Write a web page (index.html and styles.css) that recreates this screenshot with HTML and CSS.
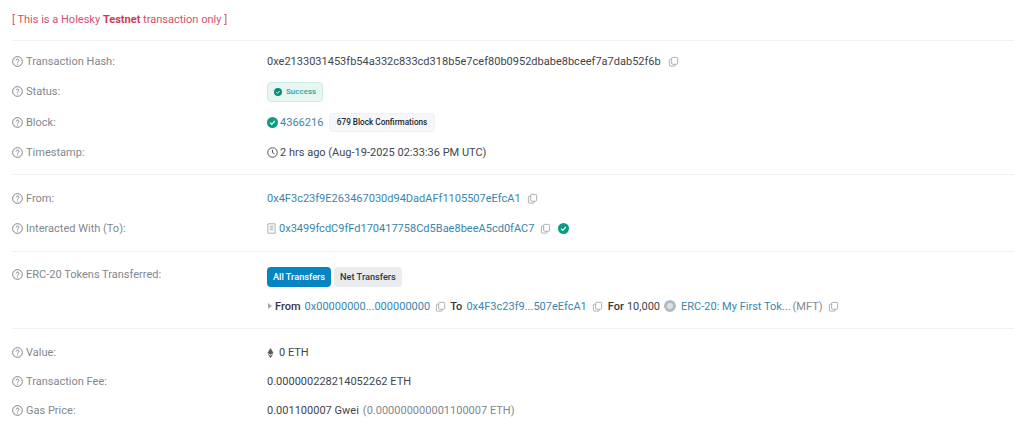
FILE: index.html
```html
<!DOCTYPE html>
<html lang="en">
<head>
<meta charset="utf-8">
<title>Transaction Details</title>
<link rel="stylesheet" href="styles.css">
</head>
<body>
<svg class="defs" width="0" height="0" aria-hidden="true">
  <symbol id="q" viewBox="0 0 12 12">
    <circle cx="6" cy="6" r="5.300" fill="none" stroke="currentColor" stroke-width="1"/>
    <path d="M4.500 4.800a1.500 1.500 0 1 1 2.300 1.300c-.5.300-.8.500-.8 1" fill="none" stroke="currentColor" stroke-width="1"/>
    <circle cx="6" cy="8.700" r=".6" fill="currentColor"/>
  </symbol>
  <symbol id="copy" viewBox="0 0 12 12">
    <path d="M4 2.500a1 1 0 0 1 1-1h4.500a1 1 0 0 1 1 1v5.500a1 1 0 0 1-1 1H5a1 1 0 0 1-1-1z" fill="none" stroke="currentColor" stroke-width="1"/>
    <path d="M4 3.500H2.500a1 1 0 0 0-1 1v5.500a1 1 0 0 0 1 1H7a1 1 0 0 0 1-1V9" fill="none" stroke="currentColor" stroke-width="1"/>
  </symbol>
  <symbol id="check" viewBox="0 0 12 12">
    <circle cx="6" cy="6" r="6" fill="currentColor"/>
    <path d="M3.400 6.200l1.800 1.800 3.400-3.600" fill="none" stroke="#fff" stroke-width="1.300"/>
  </symbol>
</svg>
<main class="card">
  <p class="notice">[ This is a Holesky <b>Testnet</b> transaction only ]</p>
  <section class="section section-overview">
    <div class="row"><div class="label"><svg class="q"><use href="#q"/></svg>Transaction Hash:</div><div class="value"><span>0xe2133031453fb54a332c833cd318b5e7cef80b0952dbabe8bceef7a7dab52f6b</span><svg class="copy copy-wide"><use href="#copy"/></svg></div></div>
    <div class="row"><div class="label"><svg class="q"><use href="#q"/></svg>Status:</div><div class="value"><span class="status"><svg class="tick-s"><use href="#check"/></svg>Success</span></div></div>
    <div class="row"><div class="label"><svg class="q"><use href="#q"/></svg>Block:</div><div class="value"><svg class="tick"><use href="#check"/></svg><a href="#">4366216</a><span class="pill">679 Block Confirmations</span></div></div>
    <div class="row"><div class="label"><svg class="q"><use href="#q"/></svg>Timestamp:</div><div class="value"><svg class="clock" viewBox="0 0 12 12"><circle cx="6" cy="6" r="5.200" fill="none" stroke="currentColor" stroke-width="1"/><path d="M6 3v3.200l2.200 1.300" fill="none" stroke="currentColor" stroke-width="1"/></svg>2 hrs ago (Aug-19-2025 02:33:36 PM UTC)</div></div>
  </section>
  <section class="section section-parties">
    <div class="row"><div class="label"><svg class="q"><use href="#q"/></svg>From:</div><div class="value"><a href="#">0x4F3c23f9E263467030d94DadAFf1105507eEfcA1</a><svg class="copy"><use href="#copy"/></svg></div></div>
    <div class="row"><div class="label"><svg class="q"><use href="#q"/></svg>Interacted With (To):</div><div class="value"><svg class="doc" viewBox="0 0 10 12"><path d="M1 .8h8v10.400H1z" fill="none" stroke="currentColor"/><path d="M3 3.500h4M3 5.500h4M3 7.500h4" stroke="currentColor"/></svg><a href="#">0x3499fcdC9fFd170417758Cd5Bae8beeA5cd0fAC7</a><svg class="copy"><use href="#copy"/></svg><svg class="tick tick-after"><use href="#check"/></svg></div></div>
  </section>
  <section class="section section-tokens">
    <div class="row row-tabs"><div class="label"><svg class="q"><use href="#q"/></svg>ERC-20 Tokens Transferred:</div><div class="value"><span class="tab tab-on">All Transfers</span><span class="tab">Net Transfers</span></div></div>
    <div class="row row-transfer"><div class="label"></div><div class="value"><span class="caret"></span><b>From</b><a class="gap-l" href="#">0x00000000...000000000</a><svg class="copy"><use href="#copy"/></svg><b class="gap-to">To</b><a class="gap-l" href="#">0x4F3c23f9...507eEfcA1</a><svg class="copy"><use href="#copy"/></svg><b class="gap-l2">For</b><span class="gap-s">10,000</span><span class="token"></span><a href="#">ERC-20: My First Tok...</a><span class="muted gap-xs">(MFT)</span><svg class="copy"><use href="#copy"/></svg></div></div>
  </section>
  <section class="section section-last">
    <div class="row"><div class="label"><svg class="q"><use href="#q"/></svg>Value:</div><div class="value"><svg class="eth" viewBox="0 0 8 12"><path d="M4 0l3.600 6L4 8.200.4 6z" fill="#55585e"/><path d="M4 9.200l3.600-2.200L4 12 .4 7z" fill="#55585e"/></svg>0 ETH</div></div>
    <div class="row"><div class="label"><svg class="q"><use href="#q"/></svg>Transaction Fee:</div><div class="value">0.000000228214052262 ETH</div></div>
    <div class="row"><div class="label"><svg class="q"><use href="#q"/></svg>Gas Price:</div><div class="value">0.001100007 Gwei<span class="muted gap-l">(0.000000000001100007 ETH)</span></div></div>
  </section>
</main>
</body>
</html>
```
FILE: styles.css
```css
* { box-sizing: border-box; }
html, body { margin: 0; height: 100%; }
body {
  width: 1024px; height: 428px; overflow: hidden; background: #fff;
  font-family: Roboto, "Liberation Sans", sans-serif; font-size: 11.030px; color: #42464c;
}
.defs { position: absolute; }
a { color: #3a86ad; text-decoration: none; }
b { font-weight: 500; color: #33363b; }
.card { padding: 0 10px 0 12px; }
.notice { margin: 0; height: 40px; padding-top: 13px; line-height: 13px; color: #d0526a; }
.notice b { color: #c93a55; font-weight: 700; }
.section { border-top: 1px solid #eef0f2; }
.section-overview { padding: 5.300px 0 6.300px; }
.section-parties { padding: 8px 0 7.200px; }
.section-tokens { padding: 7px 0 5px; }
.section-last { padding: 9px 0 0; }
.section-last .row { height: 29px; }
.row { display: flex; align-items: center; height: 30.400px; }
.row-tabs { height: 30px; }
.row-tabs .value { margin-top: 6px; }
.row-transfer { height: 34px; }
.label { width: 255px; flex: none; display: flex; align-items: center; color: #83878d; }
.value { display: flex; align-items: center; white-space: nowrap; }
.q { width: 11px; height: 11px; margin-right: 3px; color: #75797f; flex: none; }
.copy { width: 11px; height: 11px; margin-left: 5px; color: #a5a9ae; flex: none; }
.copy-wide { margin-left: 7px; }
.section-parties .copy { margin-left: 6px; }
.status {
  display: inline-flex; align-items: center; height: 20px; padding: 0 6px; border-radius: 4px;
  border: 1px solid #cfe9e4; background: #e8f6f3; color: #2aa690; font-size: 8px; font-weight: 500;
}
.tick-s { width: 8px; height: 8px; margin-right: 4px; color: #0a8f79; }
.tick { width: 11px; height: 11px; margin-right: 2px; color: #0a9d82; flex: none; }
.tick-after { margin: 0 0 0 7px; }
.pill {
  margin-left: 6px; height: 19px; line-height: 17px; padding: 0 6.500px; border-radius: 4px;
  background: #f6f7f8; border: 1px solid #f0f1f3; color: #24272b; font-size: 8.200px; font-weight: 500;
}
.clock { width: 11px; height: 11px; margin-right: 2px; color: #42464c; }
.doc { width: 9px; height: 11px; margin-right: 3px; color: #a3a7ac; flex: none; }
.tab {
  height: 20px; line-height: 20px; padding: 0 6px; border-radius: 4px; margin-right: 3px;
  background: #e9ecef; color: #33363b; font-size: 9.200px; font-weight: 500;
}
.tab-on { background: #0784c3; color: #fff; }
.caret { width: 0; height: 0; border-left: 4px solid #a3a7ac; border-top: 3px solid transparent; border-bottom: 3px solid transparent; margin: 0 3px 0 1px; }
.gap-l { margin-left: 4px; }
.gap-s { margin-left: 3px; }
.gap-xs { margin-left: 2px; }
.gap-to { margin-left: 4px; }
.gap-l2 { margin-left: 5px; }
.token { width: 12px; height: 12px; margin: 0 5px 0 4px; border-radius: 50%; background: #dfe1e4; border: 3px solid #b5bac0; flex: none; }
.muted { color: #83878d; }
.eth { width: 7px; height: 10px; margin: 0 5px 0 0; flex: none; }
```
